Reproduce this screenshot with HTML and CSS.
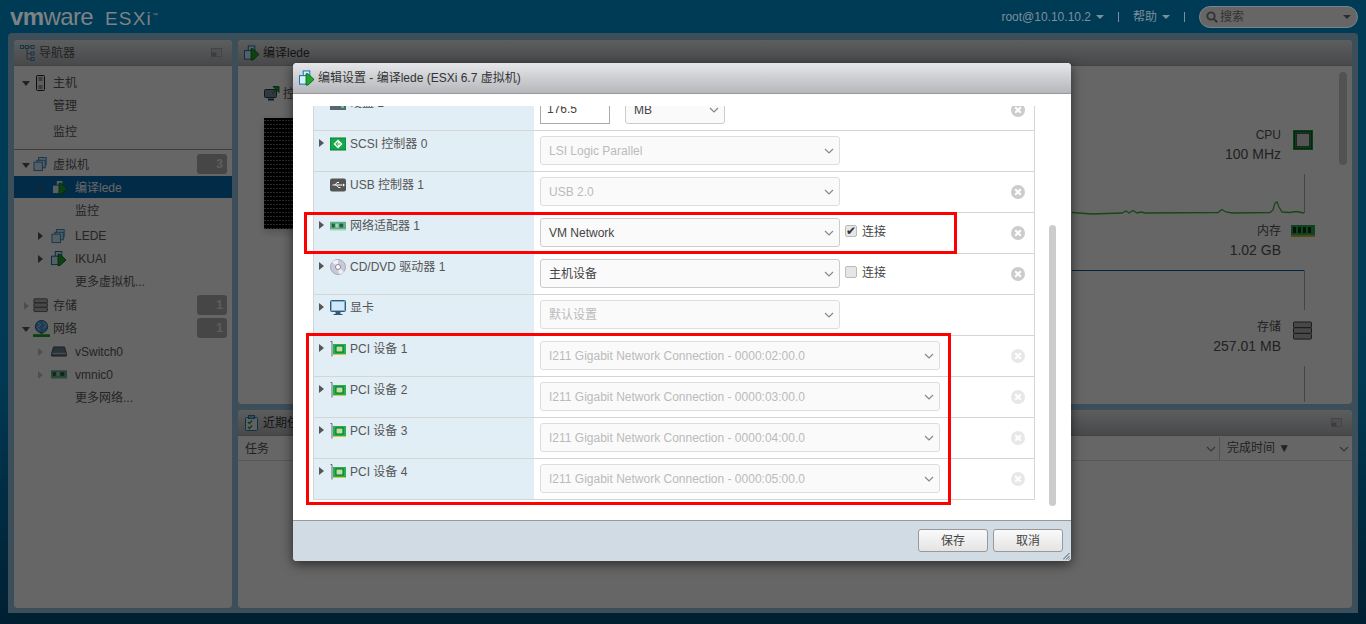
FILE: index.html
```html
<!DOCTYPE html>
<html lang="zh">
<head>
<meta charset="utf-8">
<title>VMware ESXi</title>
<link rel="stylesheet" href="styles.css">
</head>
<body>
<svg class="defs" width="0" height="0" aria-hidden="true">
  <defs>
    <symbol id="i-tree" viewBox="0 0 16 16"><g fill="none" stroke="#2c88c8" stroke-width="1"><rect x=".5" y=".5" width="3" height="3"/><rect x="5.5" y=".5" width="3" height="3"/><rect x="11" y=".5" width="3" height="3"/><rect x="11" y="7" width="3" height="3"/><rect x="11" y="12.5" width="3" height="3"/></g><path d="M3.5 2h2M8.500 2H11M7 4v10h4M7 8.500h4" stroke="#777" fill="none"/></symbol>
    <symbol id="i-host" viewBox="0 0 12 16"><rect x="1.500" y=".5" width="8" height="15" rx="1" fill="#eee" stroke="#222"/><path d="M3.500 3h4M3.500 5h4M3.500 11h4M3.500 13h4" stroke="#444"/></symbol>
    <symbol id="i-vms" viewBox="0 0 16 16"><g fill="#d8eaf6" stroke="#2c88c8"><rect x="5.500" y=".5" width="8" height="8"/><rect x="3.500" y="3.500" width="9" height="8" /><rect x=".5" y="5.500" width="9" height="9"/></g></symbol>
    <symbol id="i-vmon" viewBox="0 0 17 16"><g fill="#d8f0fa" stroke="#0a6db0"><rect x="4.500" y=".5" width="7" height="7"/><rect x=".5" y="5.500" width="9" height="9"/></g><path d="M7.500 3.500h2l6.500 6-6.500 6h-2z" fill="#1fa52c" stroke="#0c6a18"/></symbol>
    <symbol id="i-storage" viewBox="0 0 20 20"><g fill="#b4b4b4" stroke="#444"><rect x=".5" y="1" width="18" height="5.700" rx="1"/><rect x=".5" y="6.700" width="18" height="5.700" rx="1"/><rect x=".5" y="12.400" width="18" height="5.700" rx="1"/></g></symbol>
    <symbol id="i-disk" viewBox="0 0 16 16"><rect y="1" width="16" height="14" fill="#5c6670"/><path d="M11 12h3" stroke="#4fd06a" stroke-width="2"/></symbol>
    <symbol id="i-net" viewBox="0 0 18 18"><circle cx="9" cy="7" r="6.500" fill="#4d9bd8" stroke="#1a5f9a"/><path d="M5 4c2-1 3 0 3 1s-3 1-3 3 2 1 2 3M11 2c1 2 3 2 3 4s-3 1-3 3" stroke="#bfe0f5" fill="none"/><path d="M9 13v2" stroke="#555" stroke-width="2"/><rect y="15" width="18" height="3" fill="#1fa52c"/></symbol>
    <symbol id="i-switch" viewBox="0 0 17 12"><path d="M2.500 1h12l2 7v3H.5V8z" fill="#6a7f90" stroke="#3d4a55"/><path d="M1 8h15" stroke="#cfd8df"/></symbol>
    <symbol id="i-nic" viewBox="0 0 17 11"><rect y="1" width="17" height="9" fill="#5fae88"/><rect x="2" y="3" width="3" height="4" fill="#2c5a40"/><rect x="10" y="3" width="4" height="4" fill="#2c5a40"/><path d="M6 3h3v4H6z" fill="#a0d8b4"/><path d="M0 9.500h17" stroke="#bfe4cc"/></symbol>
    <symbol id="i-monitor" viewBox="0 0 16 16"><rect x=".5" y=".5" width="15" height="11" rx="1" fill="#7db4d8" stroke="#345a74"/><rect x="2" y="2" width="12" height="8" fill="#cfe7f6"/><path d="M6 12h4v2H6zM3.500 14.500h9" fill="#345a74" stroke="#345a74"/></symbol>
    <symbol id="i-console" viewBox="0 0 16 16"><rect x=".5" y="3.500" width="12" height="8" rx="1" fill="#7b8c9c" stroke="#1e4260"/><path d="M4 13.500h6" stroke="#1e4260" stroke-width="2"/><path d="M8 8l5-5m-4-2.500h6v6z" fill="#18a030" stroke="#107a22"/></symbol>
    <symbol id="i-scsi" viewBox="0 0 16 12"><rect width="16" height="12" fill="#15a84a" stroke="#0c7a33"/><path d="M8 1.500L3.500 6 8 10.500 12.500 6z" fill="#fff"/><path d="M8 3.800L5.800 6 8 8.200M6.500 6h4" fill="none" stroke="#15a84a"/></symbol>
    <symbol id="i-usb" viewBox="0 0 16 13"><rect width="16" height="13" rx="2" fill="#555"/><path d="M2.500 6.500h10M5 6.500l2-2.500h2M6.500 6.500l2 2.500h2" stroke="#fff" fill="none"/><path d="M13 5v3l2-1.500z" fill="#fff"/></symbol>
    <symbol id="i-cd" viewBox="0 0 16 16"><circle cx="8" cy="8" r="7.500" fill="#c9c9dd" stroke="#aaa"/><path d="M8 8L2 3a7 7 0 0 1 6-2zM8 8l6 5a7 7 0 0 1-5 2z" fill="#efeff8"/><circle cx="8" cy="8" r="2.500" fill="#fff" stroke="#888"/></symbol>
    <symbol id="i-pci" viewBox="0 0 16 16"><path d="M.5 .5h1.500V15.500" fill="none" stroke="#667"/><rect x="3" y="3" width="13" height="10" fill="#24b04c"/><rect x="6" y="5" width="7" height="6" fill="#b8e2a0" stroke="#0c6a28"/><path d="M3 13.500h13" stroke="#d6c34a"/></symbol>
    <symbol id="i-cpu" viewBox="0 0 20 20"><rect width="20" height="20" fill="#1e9a44"/><rect x="1.500" y="1.500" width="17" height="17" fill="none" stroke="#0c5c24"/><rect x="3.500" y="3.500" width="13" height="13" fill="#d8d8d8" stroke="#555"/></symbol>
    <symbol id="i-mem" viewBox="0 0 24 12"><rect width="24" height="10" fill="#24ad54"/><rect y="10" width="24" height="2" fill="#d4b030"/><g fill="#1a2a20"><rect x="2" y="2" width="3" height="6"/><rect x="7" y="2" width="3" height="6"/><rect x="12" y="2" width="3" height="6"/><rect x="17" y="2" width="3" height="6"/></g></symbol>
    <symbol id="i-tasks" viewBox="0 0 14 16"><rect x=".5" y="2.500" width="12" height="13" rx="1" fill="#eef5f9" stroke="#2c7ca8"/><rect x="3.500" y=".5" width="6" height="3" fill="#7fb9d8" stroke="#2c7ca8"/><path d="M3 7l1.500 1.500L7 5.500M3 12l1.500 1.500L7 10.500" fill="none" stroke="#149a3a" stroke-width="1.400"/></symbol>
    <symbol id="i-restore" viewBox="0 0 11 9"><rect x=".5" y=".5" width="10" height="8" fill="#c8c8c8" stroke="#aaa"/><rect x=".5" y="4.500" width="5" height="4" fill="#999"/></symbol>
    <symbol id="i-x" viewBox="0 0 14 14"><circle cx="7" cy="7" r="7" fill="#ccc"/><path d="M4.200 4.200l5.600 5.600m0-5.600L4.200 9.800" stroke="#fff" stroke-width="2"/></symbol>
    <symbol id="i-chev" viewBox="0 0 10 6"><path d="M1 1l4 4 4-4" fill="none" stroke="#888" stroke-width="1.200"/></symbol>
    <symbol id="i-search" viewBox="0 0 12 12"><circle cx="5" cy="5" r="3.700" fill="none" stroke="#333" stroke-width="1.800" /><path d="M8 8l3.200 3.200" stroke="#333" stroke-width="2"/></symbol>
    <symbol id="i-grip" viewBox="0 0 7 7"><path d="M6.500 0L0 6.500M6.500 3L3 6.500M6.500 5.500l-1 1" stroke="#555"/></symbol>
  </defs>
</svg>

<header class="topbar">
  <div class="brand"><span class="brand-vm"><b>vm</b>ware</span><span class="brand-esxi">ESXi<small>™</small></span></div>
  <nav class="top-menu">
    <span>root@10.10.10.2</span><i class="caret"></i>
    <b class="pipe"></b>
    <span>帮助</span><i class="caret"></i>
    <b class="pipe"></b>
    <div class="search"><svg class="ico-search"><use href="#i-search"/></svg><span>搜索</span><i class="caret caret-dark"></i></div>
  </nav>
</header>

<div class="frame">
  <aside class="panel nav">
    <div class="panel-head"><svg class="ico16"><use href="#i-tree"/></svg><span class="head-title">导航器</span><svg class="restore"><use href="#i-restore"/></svg></div>
    <div class="nav-body">
      <div class="nav-group-host">
        <div class="nav-row d1"><i class="tri-d"></i><span class="slot1"><svg class="ico-host"><use href="#i-host"/></svg></span>主机</div>
        <div class="nav-row d0">管理</div>
        <div class="nav-row d0 gap3">监控</div>
      </div>
      <div class="nav-group-vms">
        <div class="nav-row d1"><i class="tri-d"></i><span class="slot1"><svg class="ico15"><use href="#i-vms"/></svg></span>虚拟机<span class="badge">3</span></div>
        <div class="nav-row d2 selected"><i class="tri-d tri-dim"></i><span class="slot2 slot2-sel"><svg class="ico15"><use href="#i-vmon"/></svg></span>编译lede</div>
        <div class="nav-row d3">监控</div>
        <div class="nav-row d2 gap3 short"><i class="tri-r"></i><span class="slot2"><svg class="ico15"><use href="#i-vms"/></svg></span>LEDE</div>
        <div class="nav-row d2"><i class="tri-r"></i><span class="slot2"><svg class="ico15"><use href="#i-vmon"/></svg></span>IKUAI</div>
        <div class="nav-row d3">更多虚拟机...</div>
      </div>
      <div class="nav-row d1"><i class="tri-r tri-faint"></i><span class="slot1"><svg class="ico15"><use href="#i-storage"/></svg></span>存储<span class="badge">1</span></div>
      <div class="nav-row d1"><i class="tri-d"></i><span class="slot1"><svg class="ico-net"><use href="#i-net"/></svg></span>网络<span class="badge">1</span></div>
      <div class="nav-row d2"><i class="tri-r tri-faint"></i><span class="slot2"><svg class="ico-sw"><use href="#i-switch"/></svg></span>vSwitch0</div>
      <div class="nav-row d2"><i class="tri-r tri-faint"></i><span class="slot2"><svg class="ico-sw"><use href="#i-nic"/></svg></span>vmnic0</div>
      <div class="nav-row d3">更多网络...</div>
    </div>
  </aside>

  <main class="main-col">
    <section class="panel vm-panel">
      <div class="panel-head"><svg class="ico16"><use href="#i-vmon"/></svg><span class="head-title head-title-vm">编译lede</span></div>
      <div class="vm-body">
        <div class="console">
          <div class="console-title"><svg class="ico16"><use href="#i-console"/></svg><span>控制台</span></div>
          <div class="thumb"></div>
        </div>
        <div class="stats">
          <div class="stat"><div class="stat-text"><span>CPU</span><span class="stat-val">100 MHz</span></div><span class="stat-ico"><svg class="ico-cpu"><use href="#i-cpu"/></svg></span></div>
          <div class="stat"><div class="stat-text"><span>内存</span><span class="stat-val">1.02 GB</span></div><span class="stat-ico"><svg class="ico-mem"><use href="#i-mem"/></svg></span></div>
          <div class="stat"><div class="stat-text"><span>存储</span><span class="stat-val">257.01 MB</span></div><span class="stat-ico"><svg class="ico-sto"><use href="#i-storage"/></svg></span></div>
        </div>
        <svg class="charts" viewBox="1071 0 240 338">
          <path d="M1304.500 108v39M1304.500 204v40M1304.500 300v36" stroke="#aaa" fill="none"/>
          <polyline points="1072,146.500 1092,148 1122,147 1126,145 1129,147 1133,144.500 1137,147 1141,146 1145,147 1218,146.500 1222,143.500 1226,146 1232,147 1270,146.500 1273,144 1275,137 1277,136 1279,141 1282,146 1290,146.500 1296,145.500 1304,147" fill="none" stroke="#3fae3f" stroke-width="1.300"/>
          <path d="M1072 204.500h232" stroke="#0a5a9c" fill="none"/>
        </svg>
        <i class="vm-scroll"></i>
      </div>
    </section>
    <section class="panel tasks">
      <div class="panel-head"><svg class="ico16"><use href="#i-tasks"/></svg><span class="head-title head-title-vm">近期任务</span><svg class="restore restore-tasks"><use href="#i-restore"/></svg></div>
      <div class="tasks-cols">
        <span class="col-task">任务</span>
        <svg class="chev"><use href="#i-chev"/></svg>
        <span class="col-done">完成时间 ▼</span>
        <svg class="chev"><use href="#i-chev"/></svg>
      </div>
    </section>
  </main>
</div>

<div class="overlay"></div>

<div class="modal">
  <div class="modal-head"><svg class="ico16"><use href="#i-vmon"/></svg><span>编辑设置 - 编译lede (ESXi 6.7 虚拟机)</span></div>
  <div class="modal-body">
    <div class="scroller">
      <div class="table">
        <div class="row">
          <div class="cell-l"><span class="tri-slot"></span><svg class="ico-dev"><use href="#i-disk"/></svg>硬盘 1</div>
          <div class="cell-r"><span class="input">176.5</span><span class="sel sel-unit">MB<svg class="chev"><use href="#i-chev"/></svg></span><svg class="rm"><use href="#i-x"/></svg></div>
        </div>
        <div class="row">
          <div class="cell-l"><i class="tri-r tri-slot-i"></i><svg class="ico-dev"><use href="#i-scsi"/></svg>SCSI 控制器 0</div>
          <div class="cell-r"><span class="sel off">LSI Logic Parallel<svg class="chev"><use href="#i-chev"/></svg></span></div>
        </div>
        <div class="row">
          <div class="cell-l"><span class="tri-slot"></span><svg class="ico-dev"><use href="#i-usb"/></svg>USB 控制器 1</div>
          <div class="cell-r"><span class="sel off">USB 2.0<svg class="chev"><use href="#i-chev"/></svg></span><svg class="rm"><use href="#i-x"/></svg></div>
        </div>
        <div class="row">
          <div class="cell-l"><i class="tri-r tri-slot-i"></i><svg class="ico-dev"><use href="#i-nic"/></svg>网络适配器 1</div>
          <div class="cell-r"><span class="sel">VM Network<svg class="chev"><use href="#i-chev"/></svg></span><span class="check on">✔</span><span class="check-label">连接</span><svg class="rm"><use href="#i-x"/></svg></div>
        </div>
        <div class="row">
          <div class="cell-l"><i class="tri-r tri-slot-i"></i><svg class="ico-dev"><use href="#i-cd"/></svg>CD/DVD 驱动器 1</div>
          <div class="cell-r"><span class="sel">主机设备<svg class="chev"><use href="#i-chev"/></svg></span><span class="check"></span><span class="check-label">连接</span><svg class="rm"><use href="#i-x"/></svg></div>
        </div>
        <div class="row">
          <div class="cell-l"><i class="tri-r tri-slot-i"></i><svg class="ico-dev"><use href="#i-monitor"/></svg>显卡</div>
          <div class="cell-r"><span class="sel off">默认设置<svg class="chev"><use href="#i-chev"/></svg></span></div>
        </div>
        <div class="row">
          <div class="cell-l"><i class="tri-r tri-slot-i"></i><svg class="ico-dev"><use href="#i-pci"/></svg>PCI 设备 1</div>
          <div class="cell-r"><span class="sel off wide">I211 Gigabit Network Connection - 0000:02:00.0<svg class="chev"><use href="#i-chev"/></svg></span><svg class="rm rm-off"><use href="#i-x"/></svg></div>
        </div>
        <div class="row">
          <div class="cell-l"><i class="tri-r tri-slot-i"></i><svg class="ico-dev"><use href="#i-pci"/></svg>PCI 设备 2</div>
          <div class="cell-r"><span class="sel off wide">I211 Gigabit Network Connection - 0000:03:00.0<svg class="chev"><use href="#i-chev"/></svg></span><svg class="rm rm-off"><use href="#i-x"/></svg></div>
        </div>
        <div class="row">
          <div class="cell-l"><i class="tri-r tri-slot-i"></i><svg class="ico-dev"><use href="#i-pci"/></svg>PCI 设备 3</div>
          <div class="cell-r"><span class="sel off wide">I211 Gigabit Network Connection - 0000:04:00.0<svg class="chev"><use href="#i-chev"/></svg></span><svg class="rm rm-off"><use href="#i-x"/></svg></div>
        </div>
        <div class="row">
          <div class="cell-l"><i class="tri-r tri-slot-i"></i><svg class="ico-dev"><use href="#i-pci"/></svg>PCI 设备 4</div>
          <div class="cell-r"><span class="sel off wide">I211 Gigabit Network Connection - 0000:05:00.0<svg class="chev"><use href="#i-chev"/></svg></span><svg class="rm rm-off"><use href="#i-x"/></svg></div>
        </div>
      </div>
    </div>
    <i class="modal-scroll"></i>
  </div>
  <div class="modal-foot"><button class="btn">保存</button><button class="btn">取消</button><svg class="grip"><use href="#i-grip"/></svg></div>
</div>

<div class="mark mark-net"></div>
<div class="mark mark-pci"></div>
</body>
</html>
```
FILE: styles.css
```css
* { box-sizing: border-box; }
html, body { height: 100%; }
body {
  margin: 0;
  height: 624px;
  overflow: hidden;
  position: relative;
  display: flex;
  flex-direction: column;
  font: 12px/16px "Liberation Sans", "Noto Sans CJK SC", sans-serif;
  color: #555;
  background: linear-gradient(#0095d8, #0090d0 60%, #00507c);
}
.defs { position: absolute; }
svg { display: block; flex: none; }
i { display: block; flex: none; }

/* top bar: sits above the dimming layer, so it carries its dimmed colours directly */
.topbar { height: 33px; flex: none; display: flex; justify-content: space-between; align-items: center; padding: 0 8px 0 10px; position: relative; z-index: 1; }
.brand { display: flex; align-items: baseline; color: #7f8285; }
.brand-vm { font-size: 24px; line-height: 24px; letter-spacing: -.6px; width: 95px; white-space: nowrap; }
.brand-vm b { font-weight: 700; }
.brand-esxi { font-size: 19px; line-height: 24px; letter-spacing: 1.200px; }
.brand-esxi small { font-size: 6px; vertical-align: 8px; letter-spacing: 0; }
.top-menu { display: flex; align-items: center; color: #7d8f9b; }
.caret { width: 0; height: 0; border: 4px solid transparent; border-top-color: #7d8f9b; border-bottom: 0; margin-left: 5px; }
.pipe { width: 1px; height: 10px; background: #7d8f9b; margin: 0 14px; }
.search { width: 159px; height: 22px; border-radius: 11px; background: #666; border: 1px solid #75848e; display: flex; align-items: center; color: #333; padding: 0 6px; }
.ico-search { width: 12px; height: 12px; margin-right: 2px; }
.search span { flex: 1; }
.caret-dark { border-top-color: #2c2c2c; }

/* frame + panels */
.frame { flex: none; height: 580px; margin: 0 8px; padding: 7px 6px 5px; background: #97c4df; border-radius: 4px 4px 0 0; display: flex; gap: 6px; }
.panel { background: #fff; border-radius: 4px; display: flex; flex-direction: column; overflow: hidden; }
.panel-head { height: 26px; flex: none; display: flex; align-items: center; padding: 0 6px; background: linear-gradient(#e8e9eb, #b4b6b9); border-bottom: 1px solid #aaa; color: #555; }
.ico16 { width: 16px; height: 16px; }
.head-title { flex: 1; margin-left: 3px; }
.head-title-vm { color: #333; }
.restore { width: 11px; height: 9px; margin-right: 4px; }

.nav { width: 218px; flex: none; }
.nav-body { padding-top: 5px; }
.nav-group-host { padding-bottom: 6px; border-bottom: 1px solid #999; margin-bottom: 3px; }
.nav-group-vms { margin-bottom: 1px; }
.nav-row { height: 23px; display: flex; align-items: center; color: #5a5a5a; position: relative; }
.short { height: 22px; }
.gap3 { margin-top: 3px; }
.d0 { padding-left: 39px; }
.d1 { padding-left: 8px; }
.d2 { padding-left: 24px; }
.d3 { padding-left: 61px; }
.slot1 { width: 23px; display: flex; justify-content: center; padding-right: 1px; }
.slot2 { width: 32px; display: flex; justify-content: center; padding-right: 1px; }
.slot2-sel { width: 31px; padding-left: 1px; }
.tri-d { width: 0; height: 0; border: 4px solid transparent; border-top: 5px solid #555; border-bottom: 0; margin-top: 1px; }
.tri-r { width: 0; height: 0; border: 4px solid transparent; border-left: 5px solid #555; border-right: 0; }
.d1 .tri-r { margin: 0 1px 0 2px; }
.tri-dim { opacity: .6; }
.tri-faint { opacity: .35; }
.selected { background: #076db4; color: #fff; height: 22px; margin-bottom: 1px; padding: 1px 0 0 22px; }
.ico-host { width: 12px; height: 16px; }
.ico15 { width: 16px; height: 15px; }
.ico-net { width: 17px; height: 17px; }
.ico-sw { width: 16px; height: 11px; }
.badge { position: absolute; right: 5px; top: 1px; width: 30px; height: 20px; border-radius: 3px; background: #b0b0b0; color: #e8e8e8; font-weight: 700; text-align: right; line-height: 20px; padding-right: 4px; }

.main-col { flex: 1; display: flex; flex-direction: column; gap: 6px; min-width: 0; }
.vm-panel { height: 364px; flex: none; }
.tasks { flex: 1; }
.vm-body { flex: 1; position: relative; display: flex; justify-content: space-between; }
.console { padding: 20px 0 0 26px; }
.console-title { display: flex; gap: 3px; align-items: center; height: 16px; color: #555; }
.thumb {
  width: 120px; height: 111px; margin-top: 16px;
  background-color: #000;
  background-image:
    repeating-linear-gradient(90deg, transparent 0 2px, #000 2px 3px),
    repeating-linear-gradient(#000 0 2px, #666 2px 3px, #000 3px 4px);
  box-shadow: 0 3px 8px rgba(0,0,0,.2);
}
.stats { width: 300px; padding: 60px 37px 0 0; display: flex; flex-direction: column; gap: 60px; }
.stat { display: flex; justify-content: flex-end; gap: 10px; height: 36px; }
.stat-text { display: flex; flex-direction: column; text-align: right; line-height: 18px; color: #555; }
.stat-val { font-size: 14px; line-height: 20px; }
.stat-ico { width: 24px; display: flex; justify-content: center; }
.ico-cpu { width: 20px; height: 20px; margin-top: 4px; }
.ico-mem { width: 24px; height: 12px; margin-top: 3px; }
.ico-sto { width: 20px; height: 20px; margin-top: 3px; }
.charts { position: absolute; right: 41px; top: 0; width: 240px; height: 338px; }
.vm-scroll { position: absolute; right: 5px; top: 6px; width: 8px; height: 93px; border-radius: 4px; background: #ccc; }
.tasks-cols { height: 25px; display: flex; align-items: center; border-bottom: 1px solid #ddd; padding: 1px 3px 0 7px; color: #555; }
.col-task { flex: 1; }
.col-done { width: 120px; height: 23px; line-height: 23px; margin-left: 3px; padding-left: 7px; border-left: 1px solid #ccc; }
.chev { width: 10px; height: 6px; }

.overlay { position: absolute; inset: 0; background: rgba(0,0,0,.6); }

/* modal */
.modal { position: absolute; left: 293px; top: 63px; width: 778px; height: 498px; background: #fff; border-radius: 4px; overflow: hidden; box-shadow: 0 3px 12px rgba(0,0,0,.6); display: flex; flex-direction: column; }
.modal-head { height: 31px; flex: none; display: flex; align-items: center; gap: 3px; padding-left: 6px; background: linear-gradient(#e4e6ea, #b5b7ba); border-bottom: 1px solid #999; color: #333; }
.modal-body { height: 426px; flex: none; padding: 12px 0 0 20px; display: flex; gap: 14px; }
.scroller { width: 722px; height: 394px; overflow: hidden; border-left: 1px solid #d5d5d5; border-right: 1px solid #d5d5d5; border-bottom: 1px solid #d5d5d5; }
.table { margin-top: -16px; }
.row { height: 41px; display: flex; border-bottom: 1px solid #d5d5d5; }
.row:last-child { border-bottom: 0; }
.cell-l { width: 220px; flex: none; background: #e1eef6; display: flex; align-items: flex-start; padding: 5px 0 0 5px; color: #555; line-height: 16px; }
.tri-slot { width: 11px; flex: none; }
.tri-slot-i { margin-top: 3px; margin-right: 6px; }
.ico-dev { width: 16px; height: 16px; margin-right: 4px; }
.cell-r { flex: 1; position: relative; display: flex; align-items: flex-start; padding: 5px 0 0 6px; }
.sel { width: 300px; height: 29px; display: flex; align-items: center; justify-content: space-between; padding: 0 5px 0 8px; background: #fafafa; border: 1px solid #ccc; border-radius: 3px; color: #444; }
.sel.off { color: #bbb; border-color: #ddd; }
.sel.wide { width: 400px; }
.sel-unit { width: 100px; margin-left: 15px; }
.input { width: 70px; height: 29px; display: block; line-height: 27px; padding-left: 6px; border: 1px solid #aaa; border-top-color: #bbb; background: #fff; color: #444; }
.check { width: 12px; height: 12px; margin: 7px 5px 0; border: 1px solid #bbb; border-radius: 2px; background: #e6e6e6; color: #333; font-size: 12px; line-height: 10px; text-align: center; }
.check-label { margin-top: 6px; color: #444; }
.rm { position: absolute; right: 9px; top: 13px; width: 14px; height: 14px; }
.rm-off { opacity: .45; }
.modal-scroll { width: 7px; height: 281px; margin-top: 119px; border-radius: 4px; background: #ccc; }
.modal-foot { height: 41px; flex: none; position: relative; display: flex; justify-content: flex-end; gap: 5px; padding: 8px 8px 0 0; background: #d1dbe3; border-top: 1px solid #999; }
.btn { width: 70px; height: 23px; padding: 0; border: 1px solid #999; border-radius: 3px; background: linear-gradient(#fafafa, #e4e4e4); font: inherit; color: #444; }
.grip { position: absolute; right: 1px; bottom: 1px; width: 7px; height: 7px; }

/* red annotations */
.mark { position: absolute; border: 3px solid #f00; }
.mark-net { left: 304px; top: 212px; width: 653px; height: 42px; }
.mark-pci { left: 306px; top: 333px; width: 645px; height: 172px; }
```
